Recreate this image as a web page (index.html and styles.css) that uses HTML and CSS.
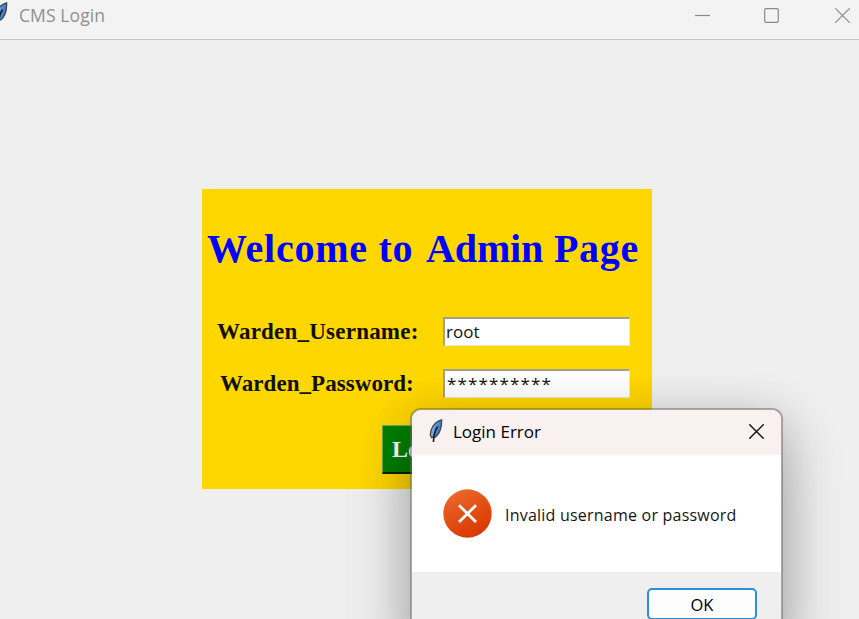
FILE: index.html
```html
<!DOCTYPE html>
<html lang="en">
<head>
<meta charset="utf-8">
<title>CMS Login</title>
<link rel="stylesheet" href="styles.css">
</head>
<body>
<svg width="0" height="0" class="defs" aria-hidden="true">
  <defs>
    <linearGradient id="quill" x1="0" y1="0" x2="1" y2="0.4"><stop offset="0.2" stop-color="#9cc8f2"/><stop offset="0.6" stop-color="#5593db"/><stop offset="1" stop-color="#3a70b5"/></linearGradient>
    <linearGradient id="alert" x1="0.2" y1="0" x2="0.7" y2="1"><stop offset="0" stop-color="#ec6a2b"/><stop offset="1" stop-color="#d83500"/></linearGradient>
    <symbol id="feather" viewBox="0 0 14 24">
      <path d="M12.6 .8C8.6 1.6 3.6 5.8 2 11.5L1.3 16.2 2.6 18.6 6.6 18C9.9 15.2 13 8.8 12.6 .8Z" fill="url(#quill)" stroke="#3c444e" stroke-width="1.3"/>
      <path d="M8.6 7.5C6.4 10.6 4.9 14 4.4 23" fill="none" stroke="#171c24" stroke-width="1.6"/>
    </symbol>
  </defs>
</svg>
<header class="titlebar">
  <svg class="app-icon" width="14" height="24"><use href="#feather"/></svg>
  <span class="title">CMS Login</span>
  <div class="controls">
    <svg width="15" height="15" viewBox="0 0 15 15"><path d="M0 7.5H15"/></svg>
    <svg width="15" height="15" viewBox="0 0 15 15"><rect x=".7" y=".7" width="13.6" height="13.6" rx="1.3"/></svg>
    <svg width="15" height="15" viewBox="0 0 15 15"><path d="M.3 .3L14.7 14.7M14.7 .3L.3 14.7"/></svg>
  </div>
</header>
<main class="window">
  <form class="panel">
    <h1>Welcome to <span class="tight">Admin</span> Page</h1>
    <div class="fields">
      <label class="user-label">Warden_Username:</label>
      <div class="entry">root</div>
      <label class="pass-label">Warden_Password:</label>
      <div class="entry secret">**********</div>
    </div>
    <div class="login">Login</div>
  </form>
</main>
<section class="dialog">
  <div class="dialog-title">
    <svg width="14" height="24"><use href="#feather"/></svg>
    <span class="dialog-name">Login Error</span>
    <svg class="close" width="15" height="15" viewBox="0 0 15 15"><path d="M.3 .3L14.7 14.7M14.7 .3L.3 14.7"/></svg>
  </div>
  <div class="dialog-body">
    <svg width="49" height="49" viewBox="0 0 49 49"><circle cx="24.5" cy="24.5" r="24.2" fill="url(#alert)"/><path d="M16 16.2L33 33M33 16.2L16 33" stroke="#fff" stroke-width="2.8"/></svg>
    <span class="message">Invalid username or password</span>
  </div>
  <div class="dialog-actions"><div class="ok"><span>OK</span></div></div>
</section>
</body>
</html>
```
FILE: styles.css
```css
* { box-sizing: border-box; }
html, body { height: 100%; }
body {
  margin: 0;
  overflow: hidden;
  position: relative;
  background: #efefef;
  font-family: "Open Sans", "Noto Sans", sans-serif;
}
svg { display: block; flex: none; }
.defs { position: absolute; }
.titlebar {
  height: 40px;
  display: flex;
  background: #f3f3f3;
  border-bottom: 1px solid #c4c4c4;
  color: #909090;
}
.app-icon { margin: 2px 0 0 -6px; }
.title { margin-left: 11px; font-size: 17.5px; line-height: 30px; letter-spacing: .1px; white-space: nowrap; }
.controls { display: flex; margin: 8px 9px 0 auto; gap: 54px; }
.controls svg { fill: none; stroke: #8a8a8a; stroke-width: 1.2; }
.controls svg:last-child { margin-left: 2px; }
.window { padding: 149px 0 0 202px; }
.panel {
  width: 450px;
  height: 300px;
  background: #ffd700;
  font-family: "Liberation Serif", serif;
  font-weight: bold;
}
h1 {
  margin: 0;
  padding: 37px 0 0 5px;
  font-size: 40px;
  line-height: 46px;
  letter-spacing: .75px;
  color: #0000ff;
  white-space: nowrap;
}
.tight { margin-left: 2px; letter-spacing: -.15px; }
.fields {
  display: grid;
  grid-template-columns: 241px 187px;
  grid-auto-rows: 29px;
  row-gap: 23px;
  padding-top: 45px;
}
.fields label { font-size: 23px; line-height: 29px; white-space: nowrap; color: #101000; }
.user-label { padding-left: 15px; letter-spacing: .22px; }
.pass-label { padding-left: 18px; letter-spacing: .05px; }
.entry {
  background: #fff;
  border: 1px solid #eee8cf;
  border-top: 2px solid #a5a08c;
  border-left: 2px solid #a5a08c;
  padding-left: 1px;
  font: 17px/26px "Open Sans", sans-serif;
  color: #111;
}
.secret { padding-left: 2px; letter-spacing: 1.15px; line-height: 25px; }
.login {
  width: 92px;
  height: 49px;
  margin: 27px 0 0 180px;
  padding-left: 9px;
  background: #008000;
  border: 1px solid #6eac58;
  border-bottom: 2px solid #101c08;
  color: #fff;
  font-size: 24px;
  line-height: 47px;
}
.dialog {
  position: absolute;
  left: 410px;
  top: 408px;
  width: 373px;
  height: 236px;
  border: 2px solid rgba(100, 100, 100, .5);
  border-radius: 11px;
  background: #efefef;
  background-clip: padding-box;
  overflow: hidden;
  box-shadow: 0 32px 64px rgba(0, 0, 0, .24), 0 8px 48px rgba(0, 0, 0, .17);
  color: #000;
}
.dialog-title { display: flex; height: 45px; background: #f9f0f0; padding-left: 17px; }
.dialog-title svg:first-child { margin-top: 9px; }
.dialog-name { margin-left: 10px; font-size: 17px; line-height: 44px; white-space: nowrap; }
.dialog-title .close { margin: 14px 17px 0 auto; stroke: #111; stroke-width: 1.4; }
.dialog-body { display: flex; align-items: center; height: 117px; background: #fff; padding-left: 31px; }
.message { margin: 2px 0 0 13px; font-size: 16px; letter-spacing: .22px; white-space: nowrap; color: #151515; }
.dialog-actions { padding: 16px 24px 0 0; display: flex; justify-content: flex-end; }
.ok {
  width: 110px;
  height: 32px;
  border: 2px solid #2d8fda;
  border-radius: 5px;
  background: #fdfdfd;
  text-align: center;
  font-size: 16.5px;
  line-height: 30px;
}
.ok span { display: inline-block; }
```
